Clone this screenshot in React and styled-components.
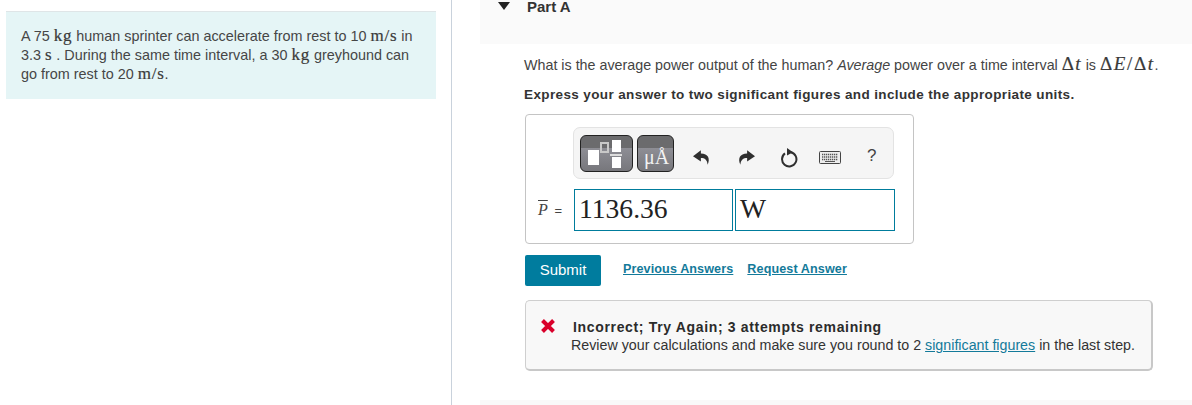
import React from "react";
import styled, { createGlobalStyle } from "styled-components";

const Global = createGlobalStyle`
  html, body { margin: 0; padding: 0; background: #fff; }
  body { font-family: "Liberation Sans", Arial, sans-serif; color: #333; overflow: hidden; }
`;
const Page = styled.div`display: flex; width: 1192px; height: 405px; overflow: hidden;`;
const LeftCol = styled.aside`
  width: 452px; height: 405px; flex: none;
  border-right: 1px solid #c9d2dc; padding-top: 11px; box-sizing: border-box;
`;
const Callout = styled.div`
  width: 430px; height: 88px; margin-left: 6px; box-sizing: border-box;
  background: #e5f5f6; border-top: 1px solid #dfe5e7;
  padding: 15px 0 0 15px; font-size: 14.4px; line-height: 19px; color: #464646; white-space: nowrap;
`;
const M = styled.span`
  font-family: "Liberation Serif", serif; font-size: ${p => p.$s || 17}px; color: #3a3a3a; line-height: 0;
  letter-spacing: ${p => p.$t ?? 0.7}px; -webkit-text-stroke: .2px #3a3a3a;
`;
const RightCol = styled.main`flex: 1; padding-left: 28px; display: flex; flex-direction: column; min-width: 0;`;
const Header = styled.header`
  height: 44px; background: #fafafa; display: flex; align-items: flex-start; flex: none;
  padding-left: 18px; box-sizing: border-box;
`;
const Caret = styled.svg`width: 12px; height: 8px; margin-top: 2px;`;
const PartTitle = styled.h2`
  margin: 0 0 0 17px; font-size: 15px; line-height: 13px; font-weight: 700; color: #333;
`;
const Content = styled.section`padding-left: 44px; flex: 1;`;
const Question = styled.p`margin: 11px 0 0; font-size: 14.3px; line-height: 20px; color: #444; white-space: nowrap; height: 20px;`;
const Instruction = styled.p`margin: 11px 0 0; font-size: 13.5px; line-height: 18px; font-weight: 700; color: #333; letter-spacing: .38px; white-space: nowrap;`;
const AnswerBox = styled.div`
  margin: 10px 0 0 1px; width: 389px; height: 130px; box-sizing: border-box;
  border: 1px solid #c4c4c4; border-radius: 4px; padding: 12px 0 0 12px;
`;
const Toolbar = styled.div`
  margin-left: 35px; width: 321px; height: 52px; box-sizing: border-box; background: #f5f5f5;
  border: 1px solid #e3e3e3; border-radius: 7px; display: flex; align-items: center; padding-left: 6px;
`;
const Tpl = styled.button`
  width: ${p => p.$w}px; height: 37px; margin-right: 4px; padding: 0; border: 1px solid #222; border-radius: 6px;
  background: linear-gradient(#6b6b6d 0, #6b6b6d 34%, #8e8e95 34%, #77777c 100%); position: relative; overflow: hidden; flex: none;
`;
const Unit = styled.span`
  font-family: "Liberation Serif", serif; color: #f2f2f2; font-size: 20px; position: absolute; left: 6px; top: 10px; line-height: 22px; white-space: nowrap;
`;
const Tool = styled.span`display: flex; width: ${p => p.$w || 18}px; height: 20px; flex: none; margin-left: ${p => p.$m}px; margin-top: 9px; align-items: center; justify-content: center; color: #333;`;
const Help = styled.span`font-size: 17px; color: #444; margin-left: 26px; margin-top: 5px; line-height: 18px;`;
const InputRow = styled.div`display: flex; align-items: center; margin-top: 10px;`;
const Label = styled.span`
  width: 36px; font-family: "Liberation Serif", serif; font-style: italic; font-size: 16px; color: #444; white-space: nowrap;
`;
const Bar = styled.span`text-decoration: overline;`;
const Eq = styled.span`font-family: "Liberation Sans", sans-serif; font-style: normal; font-size: 13px; margin-left: 3px;`;
const Field = styled.div`
  width: ${p => p.$w}px; height: 42px; box-sizing: border-box; border: 1px solid #007c9c; margin-right: 2px;
  font-family: "Liberation Serif", serif; font-size: 27.6px; line-height: 38px; padding-left: 4px; color: #222; flex: none;
`;
const Actions = styled.div`display: flex; align-items: center; margin: 11px 0 0 1px; height: 31px;`;
const Submit = styled.button`
  width: 76px; height: 31px; background: #007c9e; border: 0; border-radius: 2px; color: #fff;
  font: 15px/28px "Liberation Sans", sans-serif; padding: 0 0 2px;
`;
const ActionLink = styled.a`
  color: #137a9a; font-size: 12.6px; font-weight: 700; text-decoration: underline; margin-left: ${p => p.$m}px; margin-top: -3px; letter-spacing: .1px; white-space: nowrap;
`;
const Feedback = styled.div`
  margin: 14px 0 0 1px; width: 628px; height: 71px; box-sizing: border-box; background: #f8f8f8; border: 1px solid #cfcfcf;
  border-bottom: 2px solid #c8c8c8; border-right: 2px solid #c8c8c8; border-radius: 5px; padding: 17px 0 0 14px; display: flex;
`;
const XIcon = styled.svg`width: 16px; height: 16px; flex: none; margin-top: 0;`;
const FbText = styled.div`margin-left: 15px; white-space: nowrap;`;
const FbTitle = styled.div`font-weight: 700; color: #2b2b2b; font-size: 14px; line-height: 18px; letter-spacing: .66px; margin-left: 2px;`;
const FbBody = styled.div`color: #333; font-size: 14.25px; line-height: 18px;`;
const FbLink = styled.a`color: #137a9a; text-decoration: underline;`;
const Foot = styled.div`height: 5px; background: #f9f9f9; flex: none;`;

export default function App() {
  return (
    <Page>
      <Global />
      <LeftCol>
        <Callout>
          A 75 <M>kg</M> human sprinter can accelerate from rest to 10 <M>m/s</M> in<br />
          3.3 <M>s</M> . During the same time interval, a 30 <M>kg</M> greyhound can<br />
          go from rest to 20 <M>m/s</M>.
        </Callout>
      </LeftCol>
      <RightCol>
        <Header>
          <Caret viewBox="0 0 12 8"><path d="M0 0h12L6 8z" fill="#222" /></Caret>
          <PartTitle>Part A</PartTitle>
        </Header>
        <Content>
          <Question>
            What is the average power output of the human? <em>Average</em> power over a time interval <M $s={19} $t={1.2}>Δ<i>t</i></M> is <M $s={19} $t={1.6}>Δ<i>E</i>/Δ<i>t</i></M>.
          </Question>
          <Instruction>Express your answer to two significant figures and include the appropriate units.</Instruction>
          <AnswerBox>
            <Toolbar>
              <Tpl $w={53} aria-label="templates">
                <svg width="51" height="35" viewBox="0 0 51 35" style={{ display: "block" }}>
                  <rect x="7" y="14" width="11" height="15" fill="#fff" />
                  <rect x="20" y="7" width="7" height="9" fill="none" stroke="#c8c8c8" strokeWidth="2" />
                  <rect x="31" y="4" width="9" height="12" fill="#fff" />
                  <rect x="29" y="18" width="12" height="2" fill="#ddd" />
                  <rect x="31" y="21" width="9" height="11" fill="#fff" />
                </svg>
              </Tpl>
              <Tpl $w={37} aria-label="units"><Unit>μÅ</Unit></Tpl>
              <Tool $m={15}>
                <svg width="18" height="16" viewBox="0 0 16 14"><path d="M7 0 0 5.500 7 10V7c3.500 0 5.600 1.600 6 6 2.500-5.500.5-10-6-10z" fill="#2f2f2f" /></svg>
              </Tool>
              <Tool $m={26}>
                <svg width="18" height="16" viewBox="0 0 16 14"><path d="M9 0l7 5.500L9 10V7C5.500 7 3.400 8.600 3 13 .5 7.500 2.500 3 9 3z" fill="#2f2f2f" /></svg>
              </Tool>
              <Tool $m={23} $w={21}>
                <svg width="20" height="20" viewBox="0 0 18 20"><path d="M10.800 4.200A7.200 7.200 0 1 1 5 5.400" fill="none" stroke="#2f2f2f" strokeWidth="2" /><path d="M7 0l6 4.300-6 3.200z" fill="#2f2f2f" /></svg>
              </Tool>
              <Tool $m={20} $w={22}>
                <svg width="22" height="13" viewBox="0 0 22 13"><rect x=".5" y=".5" width="21" height="12" rx="1" fill="#eee" stroke="#444" /><path d="M3 3.500h16M3 6h16M3 8.500h16" stroke="#555" strokeWidth="1.300" strokeDasharray="1.300 .7" /><path d="M6 10.500h10" stroke="#555" /></svg>
              </Tool>
              <Help>?</Help>
            </Toolbar>
            <InputRow>
              <Label><Bar>P</Bar><Eq> =</Eq></Label>
              <Field $w={159}>1136.36</Field>
              <Field $w={160}>W</Field>
            </InputRow>
          </AnswerBox>
          <Actions>
            <Submit>Submit</Submit>
            <ActionLink $m={22}>Previous Answers</ActionLink>
            <ActionLink $m={14}>Request Answer</ActionLink>
          </Actions>
          <Feedback>
            <XIcon viewBox="0 0 16 16"><path d="M2.500 2.500 13.500 13.500M13.500 2.500 2.500 13.500" stroke="#d9002b" strokeWidth="4" fill="none" /></XIcon>
            <FbText>
              <FbTitle>Incorrect; Try Again; 3 attempts remaining</FbTitle>
              <FbBody>Review your calculations and make sure you round to 2 <FbLink>significant figures</FbLink> in the last step.</FbBody>
            </FbText>
          </Feedback>
        </Content>
        <Foot />
      </RightCol>
    </Page>
  );
}
